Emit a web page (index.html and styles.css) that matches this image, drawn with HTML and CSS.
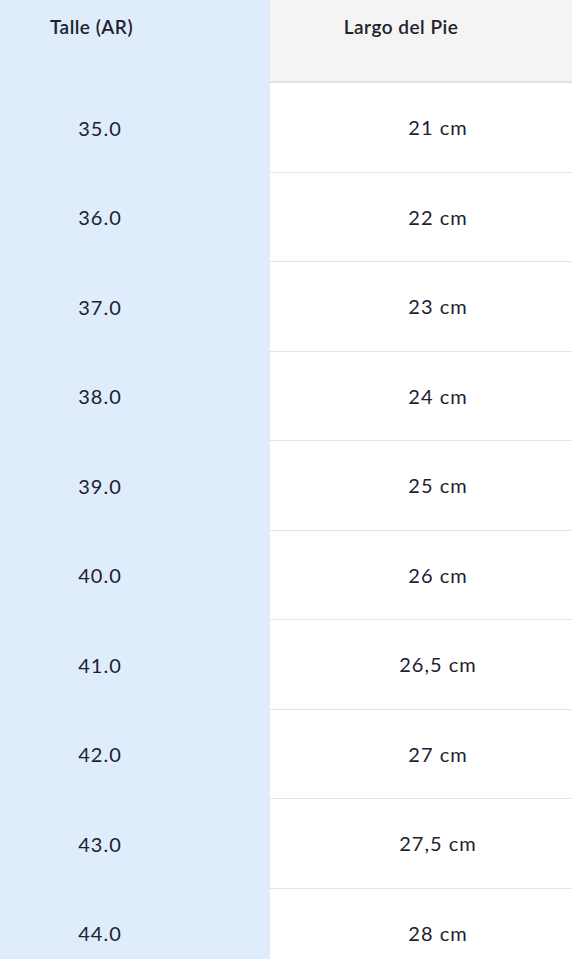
FILE: index.html
```html
<!DOCTYPE html>
<html lang="es">
<head>
<meta charset="utf-8">
<title>Tabla de talles</title>
<link rel="stylesheet" href="styles.css">
</head>
<body>
<div class="table">
  <div class="cell head key">Talle (AR)</div>
  <div class="cell head val">Largo del Pie</div>
  <div class="cell key">35.0</div><div class="cell val">21 cm</div>
  <div class="cell key">36.0</div><div class="cell val">22 cm</div>
  <div class="cell key">37.0</div><div class="cell val">23 cm</div>
  <div class="cell key">38.0</div><div class="cell val">24 cm</div>
  <div class="cell key">39.0</div><div class="cell val">25 cm</div>
  <div class="cell key">40.0</div><div class="cell val">26 cm</div>
  <div class="cell key">41.0</div><div class="cell val">26,5 cm</div>
  <div class="cell key">42.0</div><div class="cell val">27 cm</div>
  <div class="cell key">43.0</div><div class="cell val">27,5 cm</div>
  <div class="cell key">44.0</div><div class="cell val">28 cm</div>
</div>
</body>
</html>
```
FILE: styles.css
```css
html, body {
  margin: 0;
  padding: 0;
  background: #ffffff;
}
body {
  font-family: Lato, "Open Sans", sans-serif;
  color: #1e2130;
  overflow: hidden;
}
.table {
  display: grid;
  grid-template-columns: 270px 1fr;
  width: 572px;
}
.cell {
  box-sizing: border-box;
  height: 89.5px;
  display: flex;
  align-items: center;
  justify-content: center;
  font-size: 20px;
  letter-spacing: 1px;
}
.key {
  background: #dfecfb;
  padding-right: 70px;
}
.val {
  background: #ffffff;
  border-bottom: 1.5px solid #e4e4e4;
  padding-left: 34px;
}
.head {
  height: 83px;
  align-items: flex-start;
  padding-top: 15px;
  font-size: 19px;
  font-weight: 600;
  letter-spacing: 0.5px;
}
.head.key {
  padding-right: 87px;
}
.head.val {
  padding-left: 0;
  padding-right: 40px;
  background: #f4f4f4;
  border-bottom: 2px solid #e2e2e2;
}
```
